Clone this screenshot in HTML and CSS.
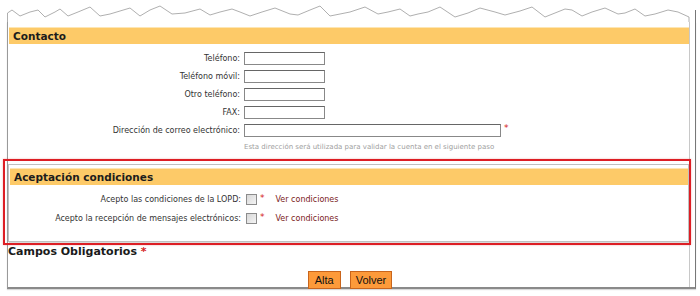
FILE: index.html
```html
<!DOCTYPE html>
<html lang="es">
<head>
<meta charset="utf-8">
<link rel="stylesheet" href="styles.css">
</head>
<body>
<div class="sheet">
  <svg class="tear" width="689" height="22" viewBox="0 0 689 22">
    <polyline fill="none" stroke="#9a9a9a" stroke-width="0.8" points="0.5,22 0.5,13 5,10 13,16 23,12 31,10 38,17 48,12 53,9 61,16 71,12 83,7 93,16 103,14 113,11 123,8 133,16 143,10 153,6 165,14 178,13 193,9 203,15 213,12 225,9 233,12 243,16 255,12 268,8 283,14 291,15 303,10 313,6 323,16 333,14 343,12 358,7 371,14 381,12 393,9 403,16 411,14 421,12 433,7 448,17 461,13 473,8 488,12 498,15 513,11 525,7 538,17 548,13 558,9 565,10 575,16 585,12 598,8 611,14 618,13 628,9 638,16 648,14 661,10 671,12 682,17 682,22"/>
    <polyline fill="none" stroke="#777" stroke-width="1" points="688.5,22 688.5,10"/>
  </svg>
  <div class="frame">
    <div class="inner">
      <h2 class="section-head">Contacto</h2>
      <div class="form-grid">
        <label class="lbl">Teléfono:</label>
        <div class="field"><span class="input short"></span></div>
        <label class="lbl">Teléfono móvil:</label>
        <div class="field"><span class="input short"></span></div>
        <label class="lbl">Otro teléfono:</label>
        <div class="field"><span class="input short"></span></div>
        <label class="lbl">FAX:</label>
        <div class="field"><span class="input short"></span></div>
        <label class="lbl">Dirección de correo electrónico:</label>
        <div class="field"><span class="input long"></span><span class="req">*</span></div>
      </div>
      <p class="hint">Esta dirección será utilizada para validar la cuenta en el siguiente paso</p>

      <div class="box">
        <h2 class="section-head">Aceptación condiciones</h2>
        <div class="check-grid">
          <label class="lbl">Acepto las condiciones de la LOPD:</label>
          <div class="field"><span class="check"></span><span class="req">*</span><a class="link">Ver condiciones</a></div>
          <label class="lbl">Acepto la recepción de mensajes electrónicos:</label>
          <div class="field"><span class="check"></span><span class="req">*</span><a class="link">Ver condiciones</a></div>
        </div>
      </div>

      <p class="mandatory">Campos Obligatorios <span class="req-big">*</span></p>

      <div class="buttons">
        <button class="btn">Alta</button>
        <button class="btn">Volver</button>
      </div>
    </div>
  </div>
  <div class="highlight"></div>
</div>
</body>
</html>
```
FILE: styles.css
```css
html, body {
  margin: 0;
  padding: 0;
  background: #fff;
}
body {
  width: 700px;
  height: 296px;
  overflow: hidden;
  font-family: "DejaVu Sans", Verdana, sans-serif;
  color: #222;
}
.sheet {
  position: relative;
  margin-left: 7px;
  width: 689px;
}
.tear {
  display: block;
}
.frame {
  border-left: 1px solid #9a9a9a;
  border-right: 1px solid #777;
  border-bottom: 2px solid #8a8a8a;
  box-shadow: 0 1px 1px rgba(0,0,0,0.15);
  height: 267px;
  box-sizing: border-box;
}
.inner {
  margin-right: 5px;
  border-right: 1px solid #c8c8c8;
  height: 100%;
  box-sizing: border-box;
  padding-top: 5px;
}
.section-head {
  margin: 0 0 0 1px;
  height: 16px;
  background: #fdca68;
  border-top: 1px solid #fde6b4;
  font-size: 10.5px;
  font-weight: bold;
  line-height: 16px;
  padding-left: 4px;
  color: #1c1c1c;
}
.form-grid, .check-grid {
  display: grid;
  grid-template-columns: 232px 1fr;
  column-gap: 4px;
  font-size: 8px;
}
.form-grid {
  margin-top: 8px;
  row-gap: 5px;
}
.lbl {
  text-align: right;
  align-self: center;
  color: #333;
  white-space: nowrap;
}
.field {
  display: flex;
  align-items: center;
}
.input {
  display: block;
  height: 13px;
  box-sizing: border-box;
  border: 1px solid #888;
  border-top-color: #666;
  background: #fff;
}
.input.short { width: 81px; }
.input.long { width: 257px; }
.req {
  color: #d42020;
  font-size: 9px;
  margin-left: 3px;
  align-self: flex-start;
  line-height: 8px;
}
.hint {
  margin: 6px 0 0 236px;
  font-size: 7px;
  color: #a0a0a0;
  line-height: 9px;
}
.box {
  margin-top: 12px;
  border: 1px solid #c0c0c0;
  box-shadow: 1px 1px 1px rgba(0,0,0,0.15);
  height: 78px;
  box-sizing: border-box;
  padding: 3px 0 0 1px;
}
.box .section-head {
  margin: 0;
}
.check-grid {
  margin-top: 9px;
  row-gap: 8px;
  grid-template-columns: 231px 1fr;
  column-gap: 5px;
}
.check {
  width: 9px;
  height: 9px;
  border: 1px solid #8c8c8c;
  background: linear-gradient(135deg, #d8d8d8, #f4f4f4);
}
.link {
  color: #7a1a1a;
  margin-left: 11px;
}
.mandatory {
  margin: 3px 0 0 0;
  font-size: 11px;
  font-weight: bold;
  color: #1a1a1a;
  line-height: 13px;
}
.req-big {
  color: #d42020;
}
.buttons {
  display: flex;
  justify-content: center;
  gap: 9px;
  margin-top: 13px;
  padding-left: 3px;
}
.btn {
  font-family: "Liberation Sans", Arial, sans-serif;
  font-size: 11px;
  height: 18px;
  padding: 0 5px;
  background: #fd9a3a;
  border: 1px solid #c9651c;
  color: #111;
  line-height: 16px;
}
.btn:first-child {
  padding: 0 6px;
}
.highlight {
  position: absolute;
  left: -4px;
  top: 159px;
  width: 688px;
  height: 86px;
  box-sizing: border-box;
  border: 2px solid #dd1e24;
  box-shadow: 0 0 2px rgba(200,0,0,0.3);
  pointer-events: none;
}
```
